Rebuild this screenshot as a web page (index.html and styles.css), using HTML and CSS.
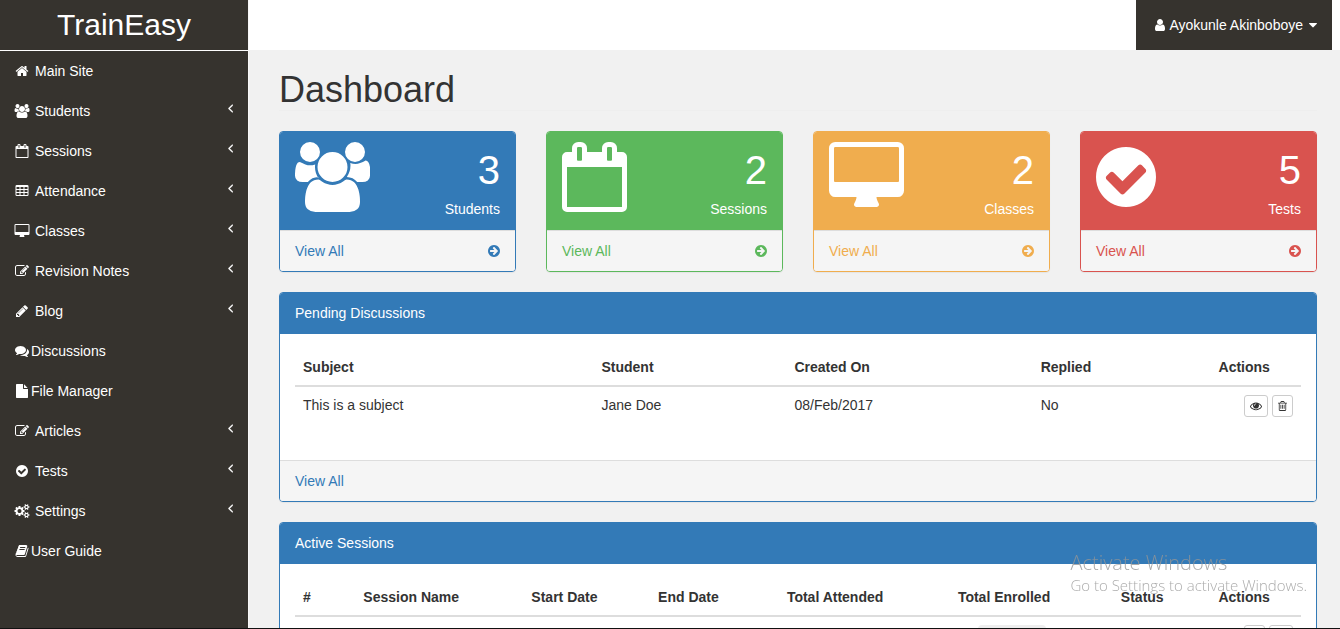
FILE: index.html
```html
<!DOCTYPE html>
<html lang="en">
<head>
<meta charset="utf-8">
<title>TrainEasy - Dashboard</title>
<link rel="stylesheet" href="styles.css">
</head>
<body>
<svg class="sprite" aria-hidden="true">
  <symbol id="home" viewBox="64 0 1664 1792"><path d="M1472 992v480q0 26-19 45t-45 19h-384v-384h-256v384h-384q-26 0-45-19t-19-45v-480q0-1 .5-3t.5-3l575-474 575 474q1 2 1 6zm223-69l-62 74q-8 9-21 11h-3q-13 0-21-7l-692-577-692 577q-12 8-24 7-13-2-21-11l-62-74q-8-10-7-23.5t11-21.5l719-599q32-26 76-26t76 26l244 204v-195q0-14 9-23t23-9h192q14 0 23 9t9 23v408l219 182q10 8 11 21.5t-7 23.5z"/></symbol>
  <symbol id="users" viewBox="0 0 1920 1792"><path d="M593 896q-162 5-265 128h-134q-82 0-138-40.5t-56-118.5q0-353 124-353 6 0 43.5 21t97.5 42.5 119 21.5q67 0 133-23-5 37-5 66 0 159 93 293zm1071 637q0 120-73 189.5t-194 69.5h-874q-121 0-194-69.5t-73-189.5q0-53 3.5-103.5t14-109 26.5-108.5 43-97.5 62-81 85.5-53.5 111.5-20q10 0 43 21.5t73 48 107 48 135 21.5 135-21.5 107-48 73-48 43-21.5q61 0 111.5 20t85.5 53.5 62 81 43 97.5 26.5 108.5 14 109 3.5 103.5zm-1024-1277q0 106-75 181t-181 75-181-75-75-181 75-181 181-75 181 75 75 181zm704 384q0 159-112.5 271.5t-271.5 112.5-271.5-112.5-112.5-271.5 112.5-271.5 271.5-112.5 271.5 112.5 112.5 271.5zm576 225q0 78-56 118.5t-138 40.5h-134q-103-123-265-128 93-134 93-293 0-29-5-66 66 23 133 23 59 0 119-21.5t97.5-42.5 43.5-21q124 0 124 353zm-128-609q0 106-75 181t-181 75-181-75-75-181 75-181 181-75 181 75 75 181z"/></symbol>
  <symbol id="calendar" viewBox="64 0 1664 1792"><path d="M192 1664h1408v-1024h-1408v1024zm384-1216v-288q0-14-9-23t-23-9h-64q-14 0-23 9t-9 23v288q0 14 9 23t23 9h64q14 0 23-9t9-23zm768 0v-288q0-14-9-23t-23-9h-64q-14 0-23 9t-9 23v288q0 14 9 23t23 9h64q14 0 23-9t9-23zm384-64v1280q0 52-38 90t-90 38h-1408q-52 0-90-38t-38-90v-1280q0-52 38-90t90-38h128v-96q0-66 47-113t113-47h64q66 0 113 47t47 113v96h384v-96q0-66 47-113t113-47h64q66 0 113 47t47 113v96h128q52 0 90 38t38 90z"/></symbol>
  <symbol id="table" viewBox="64 0 1664 1792"><path fill-rule="evenodd" d="M224 128h1344q160 0 160 160v1088q0 160-160 160h-1344q-160 0-160-160v-1088q0-160 160-160zM192 384v256h384v-256zM704 384v256h384v-256zM1216 384v256h384v-256zM192 768v256h384v-256zM704 768v256h384v-256zM1216 768v256h384v-256zM192 1152v256h384v-256zM704 1152v256h384v-256zM1216 1152v256h384v-256z"/></symbol>
  <symbol id="desktop" viewBox="0 0 1920 1792"><path fill-rule="evenodd" d="M1792 992v-832q0-13-9.500-22.500t-22.500-9.500h-1600q-13 0-22.500 9.500t-9.500 22.500v832q0 13 9.500 22.500t22.500 9.500h1600q13 0 22.500-9.500t9.500-22.500zm128-832v1088q0 66-47 113t-113 47h-544q0 37 16 77.500t32 71 16 43.500q0 26-19 45t-45 19h-512q-26 0-45-19t-19-45q0-14 16-44t32-70 16-78h-544q-66 0-113-47t-47-113v-1088q0-66 47-113t113-47h1600q66 0 113 47t47 113z"/></symbol>
  <symbol id="edit" viewBox="0 0 1792 1792"><path d="M888 1184l116-116-152-152-116 116v56h96v96h56zm440-720q-16-16-33 1l-350 350q-17 17-1 33t33-1l350-350q17-17 1-33zm80 594v190q0 119-84.5 203.5t-203.5 84.500h-832q-119 0-203.5-84.500t-84.500-203.500v-832q0-119 84.500-203.500t203.500-84.500h832q63 0 117 25 15 7 18 23 3 17-9 29l-49 49q-14 14-32 8-23-6-45-6h-832q-66 0-113 47t-47 113v832q0 66 47 113t113 47h832q66 0 113-47t47-113v-126q0-13 9-22l64-64q15-15 35-7t20 29zm-96-738l288 288-672 672h-288v-288zm444 132l-92 92-288-288 92-92q28-28 68-28t68 28l152 152q28 28 28 68t-28 68z"/></symbol>
  <symbol id="pencil" viewBox="128 0 1536 1792"><path d="M491 1536l91-91-235-235-91 91v107h128v128h107zm523-928q0-22-22-22-10 0-17 7l-542 542q-7 7-7 17 0 22 22 22 10 0 17-7l542-542q7-7 7-17zm-54-192l416 416-832 832h-416v-416zm683 96q0 53-37 90l-166 166-416-416 166-165q36-38 90-38 53 0 91 38l235 234q37 39 37 91z"/></symbol>
  <symbol id="comments" viewBox="0 0 1792 1792"><path d="M1408 768q0 139-94 257t-256.5 186.5-353.5 68.5q-86 0-176-16-124 88-278 128-36 9-86 16h-3q-11 0-20.5-8t-11.5-21q-1-3-1-6.5t.5-6.500 2-6l2.500-5 3.500-5.500 4-5 4.500-5 4-4.500q5-6 23-25t26-29.500 22.500-29 25-38.500 20.500-44q-124-72-195-177t-71-224q0-139 94-257t256.500-186.500 353.500-68.500 353.500 68.500 256.500 186.500 94 257zm384 256q0 120-71 224.500t-195 176.500q10 24 20.500 44t25 38.500 22.500 29 26 29.500 23 25q1 1 4 4.500t4.500 5 4 5 3.500 5.500l2.500 5 2 6 .5 6.500-1 6.500q-3 14-13 22t-22 7q-50-7-86-16-154-40-278-128-90 16-176 16-271 0-472-132 58 4 88 4 161 0 309-45t264-129q125-92 192-212t67-254q0-77-23-152 129 71 204 178t75 230z"/></symbol>
  <symbol id="file" viewBox="128 0 1536 1792"><path d="M1152 512v-472q22 14 36 28l408 408q14 14 28 36h-472zm-128 32q0 40 28 68t68 28h544v1056q0 40-28 68t-68 28h-1344q-40 0-68-28t-28-68v-1600q0-40 28-68t68-28h800v544z"/></symbol>
  <symbol id="check" viewBox="128 0 1536 1792"><path d="M1412 734q0-28-18-46l-91-90q-19-19-45-19t-45 19l-408 407-226-226q-19-19-45-19t-45 19l-91 90q-18 18-18 46 0 27 18 45l362 362q19 19 45 19 27 0 46-19l543-543q18-18 18-45zm252 162q0 209-103 385.5t-279.5 279.5-385.5 103-385.5-103-279.5-279.5-103-385.5 103-385.5 279.5-279.5 385.5-103 385.5 103 279.5 279.5 103 385.5z"/></symbol>
  <symbol id="cogs" viewBox="0 0 1920 1792"><path d="M896 896q0-106-75-181t-181-75-181 75-75 181 75 181 181 75 181-75 75-181zm768 512q0-52-38-90t-90-38-90 38-38 90q0 53 37.5 90.5t90.5 37.5 90.5-37.5 37.5-90.5zm0-1024q0-52-38-90t-90-38-90 38-38 90q0 53 37.5 90.5t90.5 37.5 90.5-37.5 37.5-90.5zm-384 421v185q0 10-7 19.5t-16 10.5l-155 24q-11 35-32 76 34 48 90 115 7 11 7 20 0 12-7 19-23 30-82.5 89.5t-78.5 59.5q-11 0-21-7l-115-90q-37 19-77 31-11 108-23 155-7 24-30 24h-186q-11 0-20-7.5t-10-17.5l-23-153q-34-10-75-31l-118 89q-7 7-20 7-11 0-21-8-144-133-144-160 0-9 7-19 10-14 41-53t47-61q-23-44-35-82l-152-24q-10-1-17-9.5t-7-19.5v-185q0-10 7-19.5t16-10.5l155-24q11-35 32-76-34-48-90-115-7-11-7-20 0-12 7-20 22-30 82-89t79-59q11 0 21 7l115 90q34-18 77-32 11-108 23-154 7-24 30-24h186q11 0 20 7.5t10 17.5l23 153q34 10 75 31l118-89q8-7 20-7 11 0 21 8 144 133 144 160 0 8-7 19-12 16-42 54t-45 60q23 48 34 82l152 23q10 2 17 10.5t7 19.5zM1920 1338v140q0 16-149 31-12 27-30 52 51 113 51 138 0 4-4 7-122 71-124 71-8 0-46-47t-52-68q-20 2-30 2t-30-2q-14 21-52 68t-46 47q-2 0-124-71-4-3-4-7 0-25 51-138-18-25-30-52-149-15-149-31v-140q0-16 149-31 13-29 30-52-51-113-51-138 0-4 4-7 4-2 35-20t59-34 30-16q8 0 46 46.5t52 67.500q20-2 30-2t30 2q51-71 92-112l6-2q4 0 124 70 4 3 4 7 0 25-51 138 17 23 30 52 149 15 149 31zM1920 314v140q0 16-149 31-12 27-30 52 51 113 51 138 0 4-4 7-122 71-124 71-8 0-46-47t-52-68q-20 2-30 2t-30-2q-14 21-52 68t-46 47q-2 0-124-71-4-3-4-7 0-25 51-138-18-25-30-52-149-15-149-31v-140q0-16 149-31 13-29 30-52-51-113-51-138 0-4 4-7 4-2 35-20t59-34 30-16q8 0 46 46.5t52 67.500q20-2 30-2t30 2q51-71 92-112l6-2q4 0 124 70 4 3 4 7 0 25-51 138 17 23 30 52 149 15 149 31z"/></symbol>
  <symbol id="book" viewBox="64 0 1664 1792"><path d="M1703 478q40 57 18 129l-275 906q-19 64-76.5 107.5t-122.5 43.5h-923q-77 0-148.5-53.5t-99.5-131.5q-24-67-2-127 0-4 3-27t4-37q1-8-3-21.5t-3-19.5q2-11 8-21t16.5-23.5 16.5-23.5q23-38 45-91.5t30-91.5q3-10 .5-30t-.5-28q3-11 17-28t17-23q21-36 42-92t25-90q1-9-2.5-32t.5-28q4-13 22-30.5t22-22.500q19-26 42.500-84.500t27.500-96.500q1-8-3-25.500t-2-26.500q2-8 9-18t18-23 17-21q8-12 16.500-30.500t15-35 16-36 19.500-32 26.500-23.500 36-11.500 47.500 5.500l-1 3q38-9 51-9h761q74 0 114 56t18 130l-274 906q-36 119-71.5 153.5t-128.5 34.5h-869q-27 0-38 15-11 16-1 43 24 70 144 70h923q29 0 56-15.500t35-41.500l300-987q7-22 5-57 38 15 59 43zm-1064 2q-4 13 2 22.500t20 9.500h608q13 0 25.500-9.500t16.500-22.500l21-64q4-13-2-22.500t-20-9.500h-608q-13 0-25.500 9.500t-16.500 22.500zm-83 256q-4 13 2 22.500t20 9.500h608q13 0 25.500-9.500t16.500-22.500l21-64q4-13-2-22.500t-20-9.500h-608q-13 0-25.500 9.500t-16.500 22.500z"/></symbol>
  <symbol id="user" viewBox="256 0 1280 1792"><path d="M1536 1399q0 109-62.5 187t-150.5 78h-854q-88 0-150.5-78t-62.5-187q0-85 8.5-160.5t31.5-152 58.5-131 94-89 134.5-34.5q131 128 313 128t313-128q76 0 134.5 34.5t94 89 58.5 131 31.5 152 8.5 160.5zm-256-887q0 159-112.5 271.5t-271.5 112.5-271.5-112.5-112.5-271.5 112.5-271.5 271.5-112.5 271.5 112.5 112.5 271.5z"/></symbol>
  <symbol id="caret" viewBox="384 0 1024 1792"><path d="M1408 704q0 26-19 45l-448 448q-19 19-45 19t-45-19l-448-448q-19-19-19-45t19-45 45-19h896q26 0 45 19t19 45z"/></symbol>
  <symbol id="angle" viewBox="576 0 640 1792"><path d="M1203 544q0 13-10 23l-393 393 393 393q10 10 10 23t-10 23l-50 50q-10 10-23 10t-23-10l-466-466q-10-10-10-23t10-23l466-466q10-10 23-10t23 10l50 50q10 10 10 23z"/></symbol>
  <symbol id="arrow" viewBox="128 0 1536 1792"><path fill-rule="evenodd" d="M1413 896q0-27-18-45l-91-91-362-362q-18-18-45-18t-45 18l-91 91q-18 18-18 45t18 45l189 189h-502q-26 0-45 19t-19 45v128q0 26 19 45t45 19h502l-189 189q-18 18-18 45t18 45l91 91q18 18 45 18t45-18l362-362 91-91q18-18 18-45zm251 0q0 209-103 385.500t-279.500 279.500-385.500 103-385.500-103-279.500-279.500-103-385.500 103-385.500 279.500-279.500 385.500-103 385.500 103 279.500 279.500 103 385.500z"/></symbol>
  <symbol id="eye" viewBox="0 0 1792 1792"><path d="M1664 960q-152-236-381-353 61 104 61 225 0 185-131.5 316.5t-316.5 131.5-316.5-131.5-131.5-316.5q0-121 61-225-229 117-381 353 133 205 333.5 326.5t434.5 121.5 434.5-121.5 333.5-326.5zm-720-384q0-20-14-34t-34-14q-125 0-214.5 89.5t-89.5 214.5q0 20 14 34t34 14 34-14 14-34q0-86 61-147t147-61q20 0 34-14t14-34zm848 384q0 34-20 69-140 230-376.5 368.5t-499.5 138.5-499.5-139-376.5-368q-20-35-20-69t20-69q140-229 376.5-368t499.5-139 499.5 139 376.5 368q20 35 20 69z"/></symbol>
  <symbol id="trash" viewBox="192 0 1408 1792"><path d="M704 736v576q0 14-9 23t-23 9h-64q-14 0-23-9t-9-23v-576q0-14 9-23t23-9h64q14 0 23 9t9 23zm256 0v576q0 14-9 23t-23 9h-64q-14 0-23-9t-9-23v-576q0-14 9-23t23-9h64q14 0 23 9t9 23zm256 0v576q0 14-9 23t-23 9h-64q-14 0-23-9t-9-23v-576q0-14 9-23t23-9h64q14 0 23 9t9 23zm128 724v-948h-896v948q0 22 7 40.5t14.5 27 10.5 8.5h832q3 0 10.5-8.5t14.5-27 7-40.5zm-672-1076h448l-48-117q-7-9-17-11h-317q-10 2-17 11zm928 32v64q0 14-9 23t-23 9h-96v948q0 83-47 143.5t-113 60.5h-832q-66 0-113-58.5t-47-141.5v-952h-96q-14 0-23-9t-9-23v-64q0-14 9-23t23-9h309l70-167q15-37 54-63t79-26h320q40 0 79 26t54 63l70 167h309q14 0 23 9t9 23z"/></symbol>
</svg>

<div class="app">
  <nav class="sidebar" aria-label="Main">
    <a class="brand" href="#">TrainEasy</a>
    <ul class="menu">
      <li><a class="menu-link spaced" href="#"><svg class="icon fixed"><use href="#home"/></svg><span>Main Site</span></a></li>
      <li><a class="menu-link spaced" href="#"><svg class="icon fixed"><use href="#users"/></svg><span>Students</span><svg class="icon chevron"><use href="#angle"/></svg></a></li>
      <li><a class="menu-link spaced" href="#"><svg class="icon fixed"><use href="#calendar"/></svg><span>Sessions</span><svg class="icon chevron"><use href="#angle"/></svg></a></li>
      <li><a class="menu-link spaced" href="#"><svg class="icon fixed"><use href="#table"/></svg><span>Attendance</span><svg class="icon chevron"><use href="#angle"/></svg></a></li>
      <li><a class="menu-link spaced" href="#"><svg class="icon fixed"><use href="#desktop"/></svg><span>Classes</span><svg class="icon chevron"><use href="#angle"/></svg></a></li>
      <li><a class="menu-link spaced" href="#"><svg class="icon fixed"><use href="#edit"/></svg><span>Revision Notes</span><svg class="icon chevron"><use href="#angle"/></svg></a></li>
      <li><a class="menu-link spaced" href="#"><svg class="icon fixed"><use href="#pencil"/></svg><span>Blog</span><svg class="icon chevron"><use href="#angle"/></svg></a></li>
      <li><a class="menu-link" href="#"><svg class="icon fixed"><use href="#comments"/></svg><span>Discussions</span></a></li>
      <li><a class="menu-link" href="#"><svg class="icon fixed"><use href="#file"/></svg><span>File Manager</span></a></li>
      <li><a class="menu-link spaced" href="#"><svg class="icon fixed"><use href="#edit"/></svg><span>Articles</span><svg class="icon chevron"><use href="#angle"/></svg></a></li>
      <li><a class="menu-link spaced" href="#"><svg class="icon fixed"><use href="#check"/></svg><span>Tests</span><svg class="icon chevron"><use href="#angle"/></svg></a></li>
      <li><a class="menu-link spaced" href="#"><svg class="icon fixed"><use href="#cogs"/></svg><span>Settings</span><svg class="icon chevron"><use href="#angle"/></svg></a></li>
      <li><a class="menu-link" href="#"><svg class="icon fixed"><use href="#book"/></svg><span>User Guide</span></a></li>
    </ul>
  </nav>

  <div class="page">
    <header class="topbar">
      <button class="user-menu" type="button"><svg class="icon fixed"><use href="#user"/></svg><span>Ayokunle Akinboboye</span><svg class="icon caret"><use href="#caret"/></svg></button>
    </header>

    <main class="content">
      <h1 class="page-title">Dashboard</h1>

      <section class="cards">
        <article class="card blue">
          <div class="card-top"><svg class="icon-large wide"><use href="#users"/></svg><div class="stat"><div class="number">3</div><div>Students</div></div></div>
          <a class="card-footer" href="#"><span>View All</span><svg class="icon round"><use href="#arrow"/></svg></a>
        </article>
        <article class="card green">
          <div class="card-top"><svg class="icon-large medium"><use href="#calendar"/></svg><div class="stat"><div class="number">2</div><div>Sessions</div></div></div>
          <a class="card-footer" href="#"><span>View All</span><svg class="icon round"><use href="#arrow"/></svg></a>
        </article>
        <article class="card orange">
          <div class="card-top"><svg class="icon-large wide"><use href="#desktop"/></svg><div class="stat"><div class="number">2</div><div>Classes</div></div></div>
          <a class="card-footer" href="#"><span>View All</span><svg class="icon round"><use href="#arrow"/></svg></a>
        </article>
        <article class="card red">
          <div class="card-top"><svg class="icon-large narrow"><use href="#check"/></svg><div class="stat"><div class="number">5</div><div>Tests</div></div></div>
          <a class="card-footer" href="#"><span>View All</span><svg class="icon round"><use href="#arrow"/></svg></a>
        </article>
      </section>

      <section class="card blue panel">
        <h2 class="panel-title">Pending Discussions</h2>
        <div class="panel-body">
          <table class="table discussions">
            <colgroup><col class="subject"><col class="student"><col class="created"><col class="replied"><col class="actions-col"></colgroup>
            <thead><tr><th>Subject</th><th>Student</th><th>Created On</th><th>Replied</th><th>Actions</th></tr></thead>
            <tbody><tr><td>This is a subject</td><td>Jane Doe</td><td>08/Feb/2017</td><td>No</td>
              <td><div class="actions"><button class="action" type="button" aria-label="View"><svg class="icon-small eye"><use href="#eye"/></svg></button><button class="action" type="button" aria-label="Delete"><svg class="icon-small trash"><use href="#trash"/></svg></button></div></td></tr></tbody>
          </table>
        </div>
        <a class="card-footer" href="#">View All</a>
      </section>

      <section class="card blue panel">
        <h2 class="panel-title">Active Sessions</h2>
        <div class="panel-body">
          <table class="table">
            <colgroup><col class="index"><col class="name"><col class="start"><col class="end"><col class="attended"><col class="enrolled"><col class="status"><col class="actions-col"></colgroup>
            <thead><tr><th>#</th><th>Session Name</th><th>Start Date</th><th>End Date</th><th>Total Attended</th><th>Total Enrolled</th><th>Status</th><th>Actions</th></tr></thead>
            <tbody><tr><td></td><td></td><td></td><td></td><td></td><td><div class="tag"></div></td><td></td>
              <td><div class="actions"><button class="action" type="button" aria-label="Delete"><svg class="icon-small trash"><use href="#trash"/></svg></button><button class="action" type="button" aria-label="View"><svg class="icon-small eye"><use href="#eye"/></svg></button></div></td></tr></tbody>
          </table>
        </div>
      </section>
    </main>
  </div>
</div>

<aside class="watermark"><div class="watermark-title">Activate Windows</div><div>Go to Settings to activate Windows.</div></aside>
<div class="screen-edge"></div>
</body>
</html>
```
FILE: styles.css
```css
* { box-sizing: border-box; }

body {
  margin: 0;
  height: 100vh;
  overflow: hidden;
  background: #f1f1f1;
  color: #333;
  font: 14px/20px "Liberation Sans", Arial, sans-serif;
}

a { text-decoration: none; }
button { font: inherit; cursor: pointer; }

.sprite { position: absolute; width: 0; height: 0; }
.icon, .icon-large, .icon-small { fill: currentColor; flex: none; }
.icon { height: 14px; }
.fixed { width: 18px; }

.app { display: flex; height: 100vh; overflow: hidden; }

/* Sidebar */
.sidebar {
  width: 249px;
  flex: none;
  background: #36332e;
  border-right: 1px solid #f8f8f8;
}
.brand {
  display: block;
  height: 51px;
  padding-top: 15px;
  border-bottom: 1px solid #fff;
  color: #fff;
  font-size: 30px;
  text-align: center;
}
.menu { margin: 0; padding: 0; list-style: none; }
.menu-link {
  display: flex;
  align-items: center;
  padding: 10px 15px 10px 13px;
  color: #fff;
}
.spaced { gap: 4px; }
.chevron { width: 5px; margin: 0 0 6px auto; stroke: currentColor; stroke-width: 60; }

/* Top bar */
.page { flex: 1; min-width: 0; overflow: hidden; }
.topbar {
  display: flex;
  justify-content: flex-end;
  height: 50px;
  padding-right: 8px;
  background: #fff;
}
.user-menu {
  display: flex;
  align-items: center;
  padding: 0 15px;
  border: 0;
  background: #36332e;
  color: #fff;
}
.caret { width: 8px; margin-left: 6px; }

/* Content */
.content { padding: 20px 23px 0 30px; }
.page-title {
  margin: 0 0 20px;
  border-bottom: 1px solid #eee;
  font-size: 36px;
  font-weight: 400;
  line-height: 40px;
}
.cards { display: grid; grid-template-columns: repeat(4, 1fr); gap: 30px; }

.card {
  border: 1px solid var(--tone);
  border-radius: 4px;
  background: #fff;
  box-shadow: 0 1px 1px rgba(0, 0, 0, 0.05);
  overflow: hidden;
}
.blue { --tone: #337ab7; }
.green { --tone: #5cb85c; }
.orange { --tone: #f0ad4e; }
.red { --tone: #d9534f; }

.card-top {
  display: flex;
  justify-content: space-between;
  padding: 10px 15px 11px;
  background: var(--tone);
  color: #fff;
}
.icon-large { height: 70px; }
.wide { width: 75px; }
.medium { width: 65px; }
.narrow { width: 60px; }
.stat { text-align: right; }
.number { font-size: 40px; line-height: 57px; }

.card-footer {
  display: flex;
  align-items: center;
  justify-content: space-between;
  padding: 10px 15px;
  border-top: 1px solid #ddd;
  background: #f5f5f5;
  color: var(--tone);
}
.round { width: 12px; }

.panel { margin-top: 20px; }
.panel-title {
  margin: 0;
  padding: 10px 15px 11px;
  background: var(--tone);
  color: #fff;
  font-size: 14px;
  font-weight: 400;
}
.panel-body { padding: 15px 15px 35px; }

/* Tables */
.table { width: 100%; table-layout: fixed; border-collapse: separate; border-spacing: 0; }
.table th, .table td { padding: 8px; text-align: left; vertical-align: top; }
.table th { border-bottom: 2px solid #ddd; }
.subject { width: 29.7%; }
.student { width: 19.2%; }
.created { width: 24.5%; }
.replied { width: 17.7%; }
.actions-col { width: 9%; }
.index { width: 6%; }
.name { width: 16.7%; }
.start { width: 12.6%; }
.end { width: 12.8%; }
.attended { width: 17%; }
.enrolled { width: 16.2%; }
.status { width: 9.7%; }

.actions { display: flex; justify-content: flex-end; gap: 4px; }
.action {
  display: flex;
  align-items: center;
  height: 22px;
  padding: 0 5px;
  border: 1px solid #ccc;
  border-radius: 3px;
  background: #fff;
  color: #333;
}
.icon-small { height: 12px; }
.eye { width: 12px; }
.trash { width: 9px; }
.tag { width: 68px; height: 22px; margin-left: 20px; border-radius: 4px; background: #eee; }

/* Desktop overlay */
.watermark {
  position: fixed;
  right: 33px;
  bottom: 34px;
  color: rgba(150, 150, 150, 0.8);
  font-family: "Open Sans", "Noto Sans", sans-serif;
  font-size: 15px;
  font-weight: 300;
  pointer-events: none;
}
.watermark-title { font-size: 20px; line-height: 24px; }
.screen-edge { position: fixed; right: 0; bottom: 0; left: 0; height: 1px; background: #111; }
```
